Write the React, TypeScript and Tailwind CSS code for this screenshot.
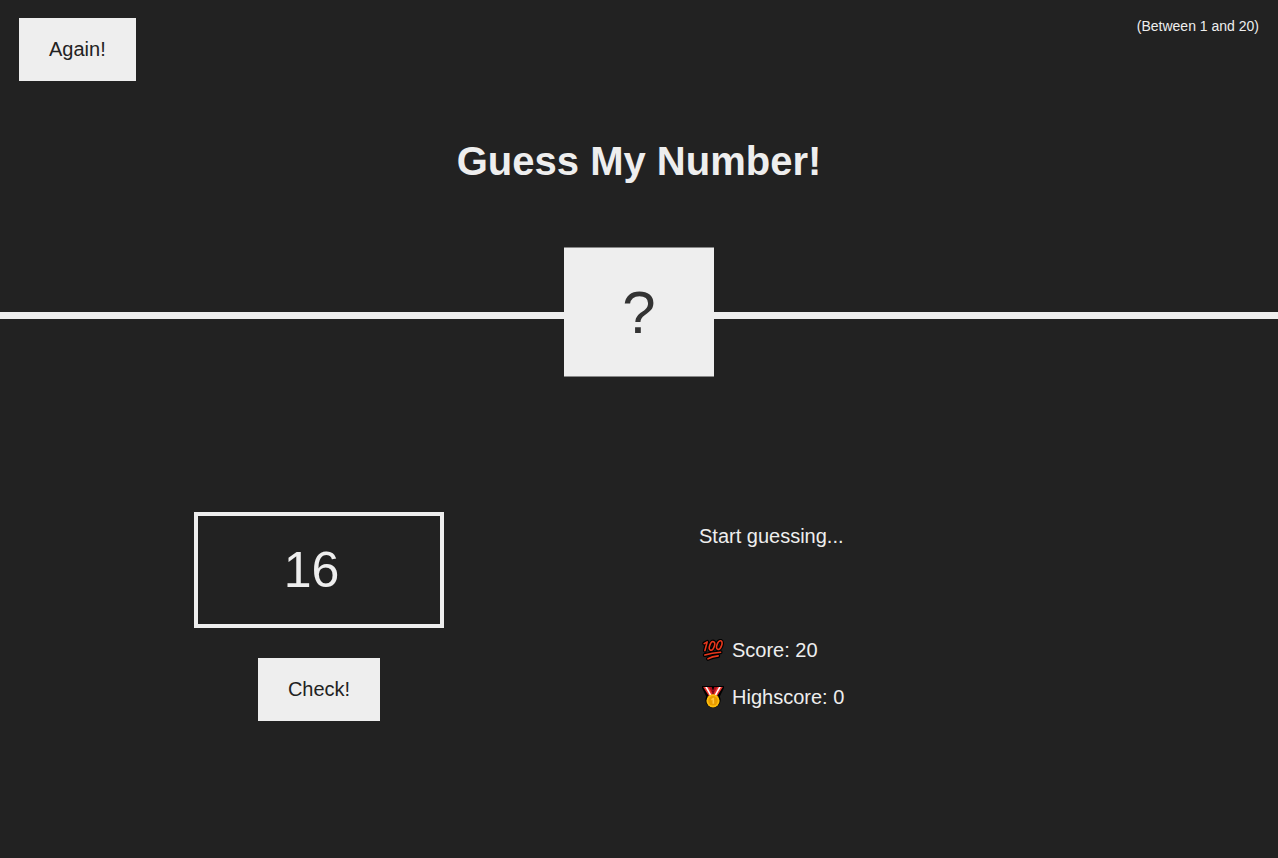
import { useState } from 'react';

const buttonClass =
  'cursor-pointer bg-[#eee] px-[30px] py-5 text-xl leading-[23px] text-[#222] hover:bg-[#ccc]';

function HundredShape() {
  return (
    <>
      <path d="M3.2 5.6 6.2 3.9 3.9 12.6" />
      <ellipse cx="11" cy="7.9" rx="2.3" ry="4.5" transform="rotate(20 11 7.9)" />
      <ellipse cx="18.3" cy="7.1" rx="2.3" ry="4.5" transform="rotate(20 18.3 7.1)" />
      <path d="M3.8 17Q11 14.6 19.6 14.2M7 20.8Q11 18.6 17.2 17.9" />
    </>
  );
}

function HundredIcon() {
  return (
    <svg
      className="-my-px h-6 w-6 shrink-0"
      viewBox="-1 1 24 24"
      fill="none"
      strokeLinecap="round"
      strokeLinejoin="round"
      aria-hidden="true"
    >
      <g stroke="#000" strokeWidth="4">
        <HundredShape />
      </g>
      <g stroke="#e8371c" strokeWidth="1.6">
        <HundredShape />
      </g>
    </svg>
  );
}

function MedalIcon() {
  return (
    <svg className="-my-px h-6 w-6 shrink-0" viewBox="-1 1 24 24" aria-hidden="true">
      <path d="M1 1h22v2l-4.2 8.6a7.6 7.6 0 1 1-13.6 0L1 3z" fill="#000" />
      <path d="M6.5 2h4.2l1.8 5-2 3zM17.5 2h-4.2l-1.8 5 2 3z" fill="#a80f1c" />
      <path d="M2.2 2h5.6l5 9h-5z" fill="#e9332c" />
      <path d="M4.2 2H6l5 9H9.2z" fill="#fff" />
      <path d="M21.8 2h-5.6l-5 9h5z" fill="#e9332c" />
      <path d="M19.8 2H18l-5 9h1.8z" fill="#fff" />
      <circle cx="12" cy="15.8" r="6.6" fill="#ffbe0b" />
      <circle cx="12" cy="15.8" r="4.8" fill="#e89b00" />
      <path d="M10.3 14.1 12.1 12.8h1v6h-1.6v-4l-1.2.7z" fill="#ffc83d" />
    </svg>
  );
}

export default function App() {
  const [secret, setSecret] = useState(() => Math.trunc(Math.random() * 20) + 1);
  const [guess, setGuess] = useState('16');
  const [message, setMessage] = useState('Start guessing...');
  const [score, setScore] = useState(20);
  const [highscore, setHighscore] = useState(0);
  const [won, setWon] = useState(false);

  function check() {
    const value = Number(guess);
    if (!value) {
      setMessage('No number!');
    } else if (value === secret) {
      setMessage('Correct number!');
      setWon(true);
      setHighscore(Math.max(highscore, score));
    } else if (score > 1) {
      setMessage(value > secret ? 'Too high!' : 'Too low!');
      setScore(score - 1);
    } else {
      setMessage('You lost the game!');
      setScore(0);
    }
  }

  function again() {
    setSecret(Math.trunc(Math.random() * 20) + 1);
    setGuess('');
    setMessage('Start guessing...');
    setScore(20);
    setWon(false);
  }

  return (
    <div className="min-h-screen bg-[#222] font-['Liberation_Sans',Arial,sans-serif] text-[#eee]">
      <header className="relative border-b-[7px] border-[#eee] pb-32">
        <div className="flex items-start justify-between px-[19px] pt-[18px]">
          <button type="button" className={buttonClass} onClick={again}>
            Again!
          </button>
          <p className="text-sm leading-4">(Between 1 and 20)</p>
        </div>
        <h1 className="mt-[57px] text-center text-[40px] leading-[46px] font-bold">
          Guess My Number!
        </h1>
        <div className="absolute bottom-0 left-1/2 w-[150px] -translate-x-1/2 translate-y-1/2 bg-[#eee] py-[30px] text-center text-[60px] leading-[69px] text-[#333]">
          {won ? secret : '?'}
        </div>
      </header>
      <main className="grid grid-cols-2 pt-[193px] pb-16">
        <section className="flex flex-col items-center gap-[30px] pr-px">
          <input
            type="number"
            aria-label="Your guess"
            className="w-[250px] border-4 border-[#eee] bg-transparent p-[25px] text-center text-[50px] leading-[58px] outline-none"
            value={guess}
            onChange={(e) => setGuess(e.target.value)}
          />
          <button type="button" className={buttonClass} onClick={check}>
            Check!
          </button>
        </section>
        <section className="pt-[13px] pl-[60px] text-xl leading-[23px]">
          <p className="mb-[91px]">{message}</p>
          <p className="mb-6 flex items-center gap-2 pl-px">
            <HundredIcon />
            <span>Score: {score}</span>
          </p>
          <p className="flex items-center gap-2 pl-px">
            <MedalIcon />
            <span>Highscore: {highscore}</span>
          </p>
        </section>
      </main>
    </div>
  );
}
